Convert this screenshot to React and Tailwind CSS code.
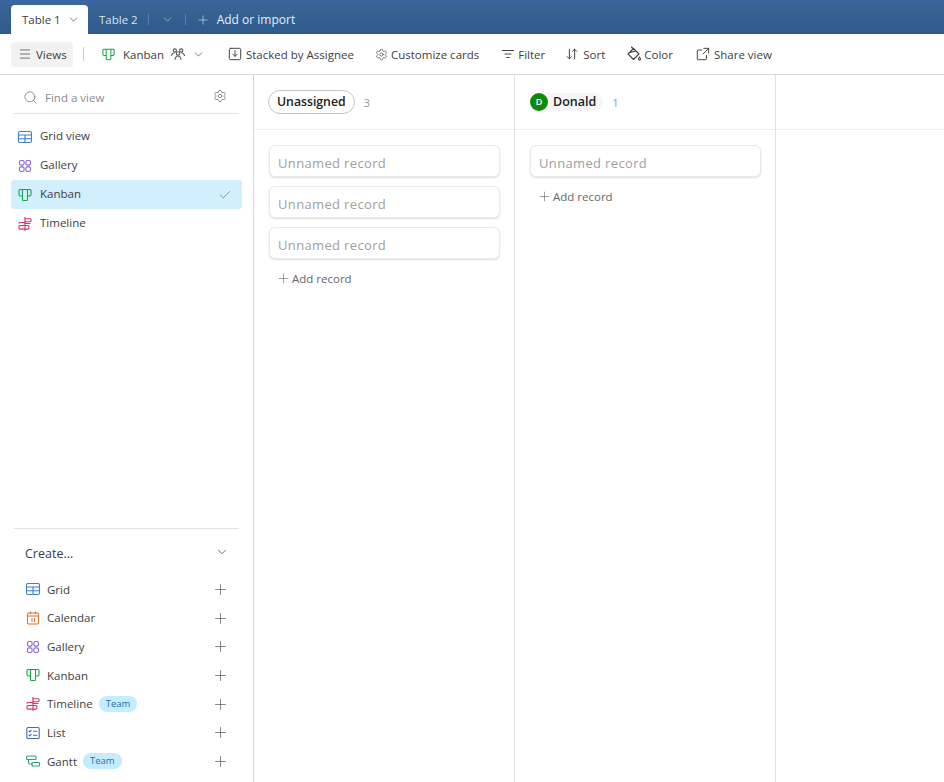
import React from "react";
import { ChevronDown, Plus, Menu, Search, Settings, Check } from "lucide-react";

const S = ({ size = 16, children, className = "" }) => (
  <svg width={size} height={size} viewBox="0 0 16 16" fill="none" stroke="currentColor" strokeWidth="1.1" strokeLinecap="round" strokeLinejoin="round" className={"shrink-0 " + className}>{children}</svg>
);
const GridIcon = () => (
  <S className="text-[#3f7fc9]"><rect x="1.5" y="2.5" width="13" height="11" rx="1.5" /><path d="M1.5 6h13M1.5 9.7h13M8 6v7.5" /></S>
);
const GalleryIcon = () => (
  <S className="text-[#8a63d8]"><rect x="2.5" y="2.5" width="4.6" height="4.6" rx="1.5" /><rect x="8.9" y="2.5" width="4.6" height="4.6" rx="1.5" /><rect x="2.5" y="8.9" width="4.6" height="4.6" rx="1.5" /><rect x="8.9" y="8.9" width="4.6" height="4.6" rx="1.5" /></S>
);
const KanbanIcon = ({ size = 16 }) => (
  <S size={size} className="text-[#17a34a]"><path d="M3 2.5h10a1 1 0 0 1 1 1v4a1.5 1.5 0 0 1-1.5 1.5h-2V2.500M5.500 2.500V9h-2A1.500 1.500 0 0 1 2 7.500v-4a1 1 0 0 1 1-1M5.500 9v3.500a1 1 0 0 0 1 1h3a1 1 0 0 0 1-1V9" /></S>
);
const TimelineIcon = () => (
  <S className="text-[#d6336c]"><path d="M8 1.500v13" /><path d="M8 2.800h5.200a.8.800 0 0 1 .8.800v1.300a.8.800 0 0 1-.8.800H8M8 6.500H2.800a.8.800 0 0 0-.8.800v0M8 7.500h5M5 9.500H2.800a.8.800 0 0 0-.8.800v2a.8.800 0 0 0 .8.800H11a.8.800 0 0 0 .8-.800v-2a.8.800 0 0 0-.8-.800H5" /></S>
);
const CalendarIcon = () => (
  <S className="text-[#dd7133]"><rect x="2.500" y="3" width="11" height="11" rx="1.200" /><path d="M2.500 6h11M5.500 1.800v2M10.500 1.800v2M7 8.500v3M9.500 8.500v3" /></S>
);
const ListIcon = () => (
  <S className="text-[#3f6db5]"><rect x="1.800" y="2.500" width="12.400" height="11" rx="1.300" /><path d="M4 6l.8.800L6.200 5.300M8.500 6.200h3.500M4 10l.8.800 1.400-1.500M8.500 10.200h3.500" /></S>
);
const GanttIcon = () => (
  <S className="text-[#2f9e83]"><rect x="1.500" y="3" width="9.500" height="3.500" rx="1" /><rect x="7" y="9.500" width="7.500" height="3.500" rx="1" /><path d="M3.500 6.500v3a1.500 1.500 0 0 0 1.500 1.500h2" /></S>
);
const PeopleIcon = () => (
  <S size={16} className="text-[#555]"><circle cx="4.800" cy="4.500" r="1.600" /><circle cx="11.200" cy="4.500" r="1.600" /><circle cx="8" cy="7.500" r="1.700" /><path d="M1.500 9.500c.4-1.300 1.400-2.500 2.800-2.800M14.500 9.500c-.4-1.300-1.400-2.500-2.800-2.800M5 13.500c.3-1.900 1.400-3.500 3-3.500s2.700 1.600 3 3.500" /></S>
);
const StackIcon = () => (
  <S size={14}><rect x="1.500" y="1.500" width="13" height="13" rx="1.500" /><path d="M8 4.500v6M5.500 8.200L8 10.700l2.500-2.500" /></S>
);
const FilterIcon = () => (
  <S size={14}><path d="M1.500 4h13M4.500 8h7M6.500 12h3" /></S>
);
const SortIcon = () => (
  <S size={14}><path d="M5 2.500v11M2.500 11L5 13.500 7.500 11M11 13.500v-11M8.500 5L11 2.500 13.500 5" /></S>
);
const ColorIcon = () => (
  <S size={16}><path d="M7.500 2.500L2 8l5.500 5.500L13 8zM5.500 1L8 3.500M4 6.500L10 5M13.500 11c.6.900 1 1.500 1 2a1 1 0 0 1-2 0c0-.5.400-1.100 1-2z" /></S>
);
const ShareIcon = () => (
  <S size={14}><path d="M6.500 3.500H2.500a1 1 0 0 0-1 1v9a1 1 0 0 0 1 1h8.500a1 1 0 0 0 1-1V9.500M9 1.500h5.500V7M14.500 1.500L8 8" /></S>
);

const ToolItem = ({ icon, label, className = "", gap = "gap-[5px]" }) => (
  <div className={"flex items-center text-[#3d3d3d] " + gap + " " + className}>
    {icon}
    <span className="whitespace-nowrap pt-[1px]">{label}</span>
  </div>
);

const ViewRow = ({ icon, label, active }) => (
  <div className={"flex items-center h-[29px] pl-[6px] pr-[10px] gap-[7px] rounded-[3px] text-[#3d3d3d] " + (active ? "bg-[#d1effd]" : "")}>
    {icon}
    <span className="flex-1 pb-[1px]">{label}</span>
    {active && <Check size={14} strokeWidth={1} className="text-[#555]" />}
  </div>
);

const CreateRow = ({ icon, label, team }) => (
  <div className="flex items-center h-[28.7px] text-[#3d3d3d]">
    <div className="w-[16px] flex justify-center">{icon}</div>
    <span className="ml-[6px]">{label}</span>
    {team && (
      <span className="ml-[6px] h-[16px] px-[7px] rounded-full bg-[#c4ecff] text-[#2a6f9e] text-[9.5px] leading-[16px]">Team</span>
    )}
    <Plus size={17} strokeWidth={1} className="ml-auto text-[#555]" />
  </div>
);

const Card = () => (
  <div className="h-[32px] w-[231px] rounded-[6px] bg-white border border-[#eaeaea] shadow-[0_1px_2px_rgba(0,0,0,0.14)] pl-[8px] pt-[5px] flex items-center text-[13px] tracking-[0.35px] text-[#a0a0a0]">
    Unnamed record
  </div>
);

const AddRecord = () => (
  <div className="flex items-center gap-[1px] ml-[7px] text-[#666]">
    <Plus size={15} strokeWidth={1} />
    <span className="pt-[1px]">Add record</span>
  </div>
);

const Column = ({ header, cards }) => (
  <div className="w-[261px] shrink-0 border-r border-[#e3e3e3] flex flex-col">
    <div className="h-[55px] shrink-0 border-b border-[#eeeeee] flex items-center pl-[14px]">{header}</div>
    <div className="pl-[15px] pt-[15px] flex flex-col gap-[9px]">
      {Array.from({ length: cards }).map((_, i) => <Card key={i} />)}
      <div className="mt-[1px]"><AddRecord /></div>
    </div>
  </div>
);

export default function App() {
  return (
    <div className="w-[944px] h-[782px] overflow-hidden bg-white flex flex-col text-[11.5px] font-['Open_Sans','Noto_Sans',sans-serif]">
      <div className="h-[34px] shrink-0 bg-gradient-to-b from-[#3c669f] via-[#33608f] to-[#2f5b8e] flex items-end pl-[11px]">
        <div className="w-[77px] h-[29px] bg-white rounded-t-[4px] flex items-center pl-[11px] gap-[6px] text-[#3d3d3d]">
          <span>Table 1</span>
          <ChevronDown size={13} strokeWidth={1.2} />
        </div>
        <div className="h-[29px] flex items-center text-[#d8e4f2]">
          <span className="ml-[11px]">Table 2</span>
          <div className="ml-[10px] w-px h-[11px] bg-[#5d80ad]" />
          <ChevronDown size={13} strokeWidth={1.2} className="ml-[12px] text-[#b9cbe0]" />
          <div className="ml-[11px] w-px h-[11px] bg-[#5d80ad]" />
          <Plus size={14} strokeWidth={1.1} className="ml-[10px]" />
          <span className="ml-[7px] text-[12px] text-[#e6edf6]">Add or import</span>
        </div>
      </div>

      <div className="h-[41px] shrink-0 border-b border-[#d6d6d6] flex items-center pl-[11px]">
        <div className="w-[62px] h-[25px] bg-[#f2f2f2] rounded-[3px] flex items-center pl-[7px] gap-[4px] text-[#3d3d3d]">
          <Menu size={14} strokeWidth={1.2} />
          <span className="pt-[1px]">Views</span>
        </div>
        <div className="ml-[10px] w-px h-[14px] bg-[#cfcfcf]" />
        <div className="ml-[17px] flex items-center text-[#3d3d3d]">
          <KanbanIcon size={15} />
          <span className="ml-[7px] pt-[1px]">Kanban</span>
          <span className="ml-[6px] flex"><PeopleIcon /></span>
          <ChevronDown size={13} strokeWidth={1.2} className="ml-[6px]" />
        </div>
        <ToolItem icon={<StackIcon />} label="Stacked by Assignee" className="ml-[23px]" gap="gap-[4px]" />
        <ToolItem icon={<Settings size={13} strokeWidth={1.2} className="shrink-0" />} label="Customize cards" className="ml-[21px]" gap="gap-[3px]" />
        <ToolItem icon={<FilterIcon />} label="Filter" className="ml-[22px]" gap="gap-[3px]" />
        <ToolItem icon={<SortIcon />} label="Sort" className="ml-[20px]" gap="gap-[4px]" />
        <ToolItem icon={<ColorIcon />} label="Color" className="ml-[21px]" gap="gap-[2px]" />
        <ToolItem icon={<ShareIcon />} label="Share view" className="ml-[23px]" gap="gap-[4px]" />
      </div>

      <div className="flex-1 flex min-h-0">
        <div className="w-[254px] shrink-0 border-r border-[#d6d6d6] flex flex-col">
          <div className="mx-[14px] h-[39px] shrink-0 border-b border-[#e3e3e3] flex items-center pl-[9px] pr-[12px] pt-[6px] text-[#8c8c8c]">
            <Search size={15} strokeWidth={1.1} className="text-[#666]" />
            <span className="ml-[7px] flex-1 pt-[2px]">Find a view</span>
            <Settings size={14} strokeWidth={1.1} className="text-[#555] -mt-[3px]" />
          </div>
          <div className="mx-[11px] mt-[8px] flex flex-col">
            <ViewRow icon={<GridIcon />} label="Grid view" />
            <ViewRow icon={<GalleryIcon />} label="Gallery" />
            <ViewRow icon={<KanbanIcon />} label="Kanban" active />
            <ViewRow icon={<TimelineIcon />} label="Timeline" />
          </div>
          <div className="flex-1" />
          <div className="mx-[14px] border-t border-[#e3e3e3] pl-[11px] pr-[10px] h-[254px] shrink-0">
            <div className="h-[47px] flex items-center justify-between text-[12.5px] text-[#3d3d3d]">
              <span className="pt-[3px]">Create...</span>
              <ChevronDown size={14} strokeWidth={1.2} className="-mt-[1px]" />
            </div>
            <div className="flex flex-col -mt-[1px]">
              <CreateRow icon={<GridIcon />} label="Grid" />
              <CreateRow icon={<CalendarIcon />} label="Calendar" />
              <CreateRow icon={<GalleryIcon />} label="Gallery" />
              <CreateRow icon={<KanbanIcon />} label="Kanban" />
              <CreateRow icon={<TimelineIcon />} label="Timeline" team />
              <CreateRow icon={<ListIcon />} label="List" />
              <CreateRow icon={<GanttIcon />} label="Gantt" team />
            </div>
          </div>
        </div>

        <Column
          cards={3}
          header={
            <div className="flex items-center">
              <span className="h-[24px] px-[8px] rounded-full border border-[#c4c4c4] flex items-center text-[12.25px] pt-[1px] font-semibold text-[#222]">Unassigned</span>
              <span className="ml-[9px] text-[#999] pt-[1px]">3</span>
            </div>
          }
        />
        <Column
          cards={1}
          header={
            <div className="flex items-center ml-[1px]">
              <div className="flex items-center bg-[#f6f6f6] rounded-full pr-[7px] h-[18px]">
                <span className="w-[18px] h-[18px] rounded-full bg-[#0f8a0f] text-white text-[9px] font-semibold flex items-center justify-center">D</span>
                <span className="ml-[5px] text-[12.5px] pt-[1px] font-semibold text-[#222]">Donald</span>
              </div>
              <span className="ml-[9px] text-[#999] pt-[1px]">1</span>
            </div>
          }
        />
        <div className="flex-1">
          <div className="h-[55px] border-b border-[#eeeeee]" />
        </div>
      </div>
    </div>
  );
}
